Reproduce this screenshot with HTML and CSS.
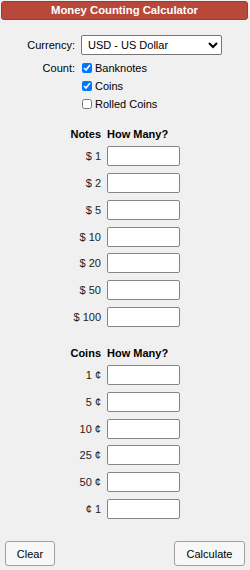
FILE: index.html
```html
<!DOCTYPE html>
<html lang="en">
<head>
    <meta charset="UTF-8">
    <meta name="viewport" content="width=device-width, initial-scale=1.0">
    <title>Money Counting Calculator</title>
    <link rel="stylesheet" href="styles.css">
</head>
<body>
    <div class="titulo">Money Counting Calculator</div>

    <div class="formulario">
        <!-- Moeda -->
        <div class="linha">
            <label class="rotulo" for="moeda">Currency:</label>
            <select id="moeda" class="moeda">
                <option>USD - US Dollar</option>
            </select>
        </div>

        <!-- O que contar -->
        <div class="linha contar">
            <span class="rotulo">Count:</span>
            <div class="opcoes">
                <label class="opcao"><input type="checkbox" checked> Banknotes</label>
                <label class="opcao"><input type="checkbox" checked> Coins</label>
                <label class="opcao"><input type="checkbox"> Rolled Coins</label>
            </div>
        </div>

        <!-- Notas -->
        <div class="tabela notas">
            <div class="cabecalho">Notes</div><div class="cabecalho esq">How Many?</div>
            <span class="valor">$ 1</span><input type="text" class="qtd">
            <span class="valor">$ 2</span><input type="text" class="qtd">
            <span class="valor">$ 5</span><input type="text" class="qtd">
            <span class="valor">$ 10</span><input type="text" class="qtd">
            <span class="valor">$ 20</span><input type="text" class="qtd">
            <span class="valor">$ 50</span><input type="text" class="qtd">
            <span class="valor">$ 100</span><input type="text" class="qtd">
        </div>

        <!-- Moedas -->
        <div class="tabela moedas">
            <div class="cabecalho">Coins</div><div class="cabecalho esq">How Many?</div>
            <span class="valor">1 ¢</span><input type="text" class="qtd">
            <span class="valor">5 ¢</span><input type="text" class="qtd">
            <span class="valor">10 ¢</span><input type="text" class="qtd">
            <span class="valor">25 ¢</span><input type="text" class="qtd">
            <span class="valor">50 ¢</span><input type="text" class="qtd">
            <span class="valor">¢ 1</span><input type="text" class="qtd">
        </div>
    </div>

    <div class="botoes">
        <button class="botao limpar">Clear</button>
        <button class="botao calcular">Calculate</button>
    </div>
</body>
</html>
```

FILE: styles.css
```css
* {
    margin: 0;
    padding: 0;
    box-sizing: border-box;
}

body {
    font-family: 'Liberation Sans', Arial, sans-serif;
    font-size: 11px;
    color: #000;
    background-color: #f0f0f0;
    width: 250px;
    height: 570px;
}

.titulo {
    margin: 1px 2px 0 1px;
    height: 19px;
    background-color: #b7483a;
    border: 1px solid #9e3a2d;
    border-radius: 3px;
    color: #fff;
    font-weight: bold;
    font-size: 11.3px;
    line-height: 17px;
    text-align: center;
}

.formulario {
    padding-top: 15px;
}

.linha {
    display: grid;
    grid-template-columns: 75px 141px;
    column-gap: 6px;
    align-items: center;
}

.rotulo {
    text-align: right;
}

.moeda {
    height: 20px;
    width: 141px;
    font-family: inherit;
    font-size: 11px;
    padding-left: 2px;
    border: 1px solid #767676;
    border-radius: 2px;
    background-color: #fff;
    color: #000;
}

.contar {
    margin-top: 4px;
    align-items: start;
}

.contar .rotulo {
    line-height: 18px;
}

.opcoes {
    display: flex;
    flex-direction: column;
}

.opcao {
    display: flex;
    align-items: center;
    height: 18px;
}

.opcao input {
    width: 10px;
    height: 10px;
    margin: 0 3px 0 1px;
}

.tabela {
    display: grid;
    grid-template-columns: 101px 73px;
    column-gap: 6px;
    row-gap: 6.8px;
    align-items: center;
}

.notas {
    margin-top: 14.3px;
}

.moedas {
    margin-top: 19px;
}

.cabecalho {
    font-weight: bold;
    text-align: right;
    line-height: 14px;
    margin-bottom: -1.8px;
}

.cabecalho.esq {
    text-align: left;
}

.valor {
    font-weight: normal;
    text-align: right;
    color: #222;
}

.qtd {
    width: 73px;
    height: 20px;
    border: 1px solid #858585;
    border-radius: 2px;
    background-color: #fff;
    font-family: inherit;
    font-size: 11px;
}

.botoes {
    display: flex;
    justify-content: space-between;
    margin: 22px 5px 0 5px;
}

.botao {
    height: 25px;
    font-family: inherit;
    font-size: 11px;
    color: #000;
    background-color: #f7f7f7;
    border: 1px solid #a0a0a0;
    border-radius: 3px;
    cursor: pointer;
}

.limpar {
    width: 50px;
}

.calcular {
    width: 71px;
}
```
